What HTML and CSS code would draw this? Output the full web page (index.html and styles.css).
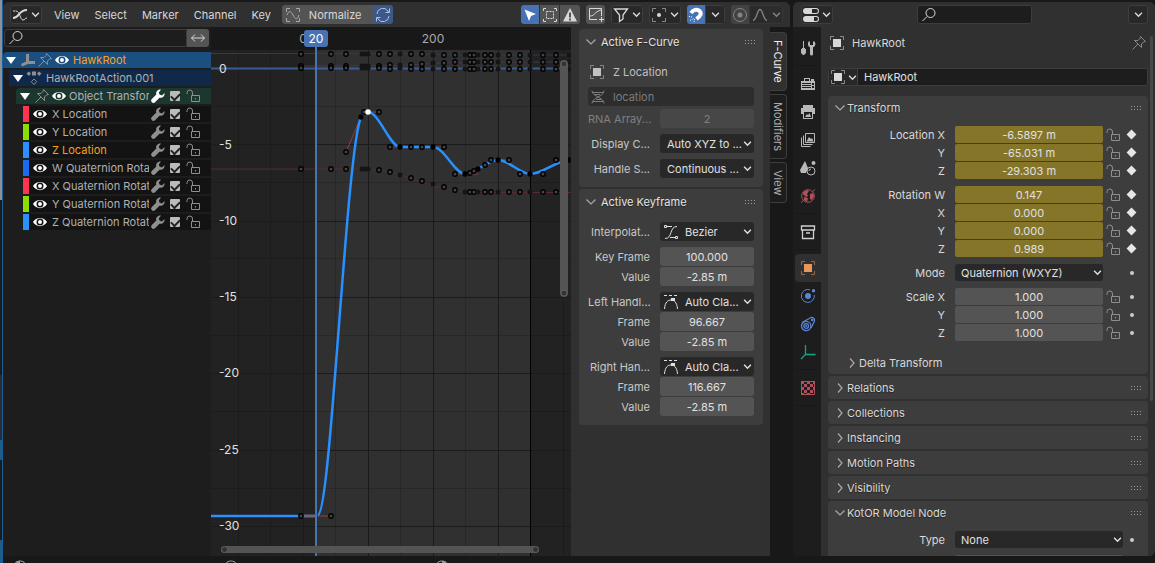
FILE: index.html
```html
<!DOCTYPE html>
<html lang="en">
<head>
<meta charset="utf-8">
<title>Graph Editor</title>
<link rel="stylesheet" href="styles.css">
</head>
<body>
<svg class="defs" aria-hidden="true">
  <symbol id="chev" viewBox="0 0 8 8"><path d="M1 2.500 4 5.500 7 2.500"/></symbol>
  <symbol id="down" viewBox="0 0 12 12"><path d="M1.500 3.500 6 8l4.500-4.500"/></symbol>
  <symbol id="right" viewBox="0 0 12 12"><path d="M4 1.500 8 6l-4 4.500"/></symbol>
  <symbol id="grip" viewBox="0 0 12 6"><path d="M1 1.500h1M4 1.500h1M7 1.500h1M10 1.500h1M1 4.500h1M4 4.500h1M7 4.500h1M10 4.500h1"/></symbol>
  <symbol id="search" viewBox="0 0 16 16"><circle cx="9.500" cy="6" r="4.500"/><path d="M6 9.500 1.500 14"/></symbol>
  <symbol id="eye" viewBox="0 0 16 16"><path class="fill" fill-rule="evenodd" d="M1 8C4 2.500 12 2.500 15 8 12 13.500 4 13.500 1 8Zm7-3.500a3.500 3.500 0 1 0 0 7 3.500 3.500 0 0 0 0-7Zm0 1.500a2 2 0 1 1 0 4 2 2 0 0 1 0-4Z"/></symbol>
  <symbol id="pin" viewBox="0 0 16 16"><path d="M9.500 1.500 14.500 6.500 12.500 7 10.500 9v3.500L3.500 5.500H7l2-2ZM7 9 1.500 14.500"/></symbol>
  <symbol id="wrench" viewBox="0 0 16 16"><path class="fill" d="M14.500 5 12 7.500 9.500 6.500 8.800 4.500 11 1.500C8 1 5.500 3.500 6.300 6.500L1.800 11a2.200 2.200 0 0 0 3.200 3.200L9.500 9.700c3 .7 5.500-1.700 5-4.700Z"/></symbol>
  <symbol id="lock" viewBox="0 0 16 16"><path d="M6.500 7.500h8v6h-8zM7.500 7.500V5a2.500 2.500 0 0 0-5.500-.5V6M10.500 10v1.500"/></symbol>
  <symbol id="object" viewBox="0 0 16 16"><path class="dim" d="M1.500 5V1.500H5M11 1.500h3.500V5M14.500 11v3.500H11M5 14.500H1.500V11"/><path class="fill" d="M4 4h8v8H4z"/></symbol>
  <symbol id="empty" viewBox="0 0 16 16"><path class="fill" d="M6 2h3v7h6v3H8l-6 2.500L1 12l5-2.500Z"/></symbol>
  <symbol id="action" viewBox="0 0 16 16"><path class="fill" d="M3 1.500 5 3.500 3 6 .5 3.500ZM13 1.500l2.500 2L13 6l-2-2.500ZM6 1.500h4v4H6z"/><path d="M8 9l2.700 2.700L8 14.500l-2.700-2.800Z"/></symbol>
  <symbol id="graph" viewBox="0 0 16 16"><path class="thick" d="M1 11c7 0 5-8 14-8"/><path d="M1 4h2.500M4 4c4 0 4 9 7 9s1-2 4-2"/></symbol>
  <symbol id="normalize" viewBox="0 0 16 16"><path d="M1.500 5V1.500H5M11 1.500h3.500V5M14.500 11v3.500H11M5 14.500H1.500V11M2 8C4 3 6 4 8 8s4 6 6 0"/></symbol>
  <symbol id="sync" viewBox="0 0 16 16"><path d="M2 7a6 6 0 0 1 11-3l.5 1M14.500 1.500v4h-4M14 9a6 6 0 0 1-11 3l-.5-1M1.500 14.500v-4h4"/></symbol>
  <symbol id="swap" viewBox="0 0 16 16"><path d="M1.500 8h13M5 4.500 1.500 8 5 11.500M11 4.500 14.500 8 11 11.500"/></symbol>
  <symbol id="cursor" viewBox="0 0 16 16"><path class="fill" d="M2.500 2.500 14 7 9 9 7 14Z"/></symbol>
  <symbol id="select-box" viewBox="0 0 16 16"><path d="M1.500 4V1.500H4M12 1.500h2.500V4M14.500 12v2.500H12M4 14.500H1.500V12"/><path stroke-dasharray="2 1" d="M4.500 4.500h7v7h-7z"/></symbol>
  <symbol id="warn" viewBox="0 0 16 16"><path class="fill" fill-rule="evenodd" d="M8 1 15 14.500H1ZM7 5.500v5h2v-5ZM7 11.500v2h2v-2Z"/></symbol>
  <symbol id="ghost" viewBox="0 0 16 16"><path d="M9 12.500H1.500v-11h12V9M2 9c5 0 4-4 11-6M13.500 10v5M11 12.500h5"/></symbol>
  <symbol id="funnel" viewBox="0 0 16 16"><path class="mid" d="M1.500 2h13L10 8v4l-3.500 2.500V8Z"/></symbol>
  <symbol id="pivot" viewBox="0 0 16 16"><path class="dim" d="M1.500 5V1.500H5M11 1.500h3.500V5M14.500 11v3.500H11M5 14.500H1.500V11"/><circle class="fill" cx="8" cy="8" r="2"/></symbol>
  <symbol id="magnet" viewBox="0 0 16 16"><path class="heavy" d="M3 6C5 3 9 1.500 11.500 4s1 5-3 8"/><path stroke-dasharray="1 1" d="M1 9.500l3 .5M2 13.500l4-2M6 15l1-4"/></symbol>
  <symbol id="prop" viewBox="0 0 16 16"><circle cx="8" cy="8" r="6.500"/><circle class="fill" cx="8" cy="8" r="2.500"/></symbol>
  <symbol id="falloff" viewBox="0 0 16 16"><path class="mid" d="M1 13.500C5 13 5 2.500 8 2.500s3 10.500 7 11"/></symbol>
  <symbol id="dna" viewBox="0 0 16 16"><path d="M2 1.500C2 8 14 8 14 14.500M14 1.500C14 8 2 8 2 14.500M2.500 3.500h11M5 5.500h5M6 10.500h5M2.500 12.500h11"/></symbol>
  <symbol id="bezier" viewBox="0 0 16 16"><path d="M2 14.500C10 14.500 6 2.500 14 2.500M4 2.500h5M7 13.500h5M1.500 1.500h2v2h-2zM12.500 12.500h2v2h-2z"/></symbol>
  <symbol id="autoclamp" viewBox="0 0 16 16"><path d="M1 1.500h3M6 1.500h3M11 1.500h3M1.500 15C2 8 5 6 8 6s6 2 6.500 9"/><path class="fill" d="M8 4h4v3H8z"/></symbol>
  <symbol id="editor-props" viewBox="0 0 16 16"><path class="fill" fill-rule="evenodd" d="M3 1h10a3 3 0 0 1 0 6H3a3 3 0 0 1 0-6Zm6 1v4h4a2 2 0 0 0 0-4ZM3 9h10a3 3 0 0 1 0 6H3a3 3 0 0 1 0-6Zm8 1v4h2a2 2 0 0 0 0-4Z"/></symbol>
  <symbol id="tools" viewBox="0 0 16 16"><path class="fill" d="M3 1h1v7h1v1h1v4l-2 2H3l-2-2V9h1V8h1ZM9 1l1 1v3h3V2l1-1c2 2 2 5-1 6.500V14a1.500 1.500 0 0 1-3 0V7.500C7.500 6 7.500 3 9 1Z"/></symbol>
  <symbol id="render" viewBox="0 0 16 16"><path class="fill" fill-rule="evenodd" d="M4 2h6v3h1V3h3v2h1v9H1V5h3Zm1 1v2h4V3ZM12 7v2h2V7Zm0 3v2h2v-2ZM2 7v1h9V7ZM2 9v1h9V9ZM2 11v1h9v-1Z"/></symbol>
  <symbol id="output" viewBox="0 0 16 16"><path class="fill" fill-rule="evenodd" d="M3 1h10v3h2v6h-2v5H3v-5H1V4h2Zm1 7v6h8V8Zm1 5 2-3 1 1 1.500-2L11 13Z"/></symbol>
  <symbol id="viewlayer" viewBox="0 0 16 16"><path d="M5.500 1.500h9v9h-9zM3.500 3.500v9h9M1.500 5.500v9h9"/><path class="fill" d="M6.500 9.500 9 5l2 2 1-1 1.500 3.500Z"/></symbol>
  <symbol id="scene" viewBox="0 0 16 16"><path class="fill" d="M5 1 8 8l-2 5H1L0 10Z"/><circle cx="11" cy="11" r="4"/><circle class="fill" cx="13.500" cy="3" r="2"/><path d="M9 11a2 2 0 0 1 2-2"/></symbol>
  <symbol id="world" viewBox="0 0 16 16"><circle cx="8" cy="8" r="6.300"/><path class="fill" d="M3 4 7 2l2 1-2 3 1 2-2 1-3-3ZM10 6l3-1 1 3-2 4-2-1ZM4 9l4 1-1 4-3-2Z"/><path d="M12 4l3-2.500M4 12l-3 2.500"/></symbol>
  <symbol id="collection" viewBox="0 0 16 16"><path class="mid" d="M1.500 2h13v4h-13zM2.500 6v8.500h11V6M6 9h4"/></symbol>
  <symbol id="physics" viewBox="0 0 16 16"><path d="M10 1.800A6.500 6.500 0 1 0 14.300 7"/><circle class="fill" cx="8" cy="8" r="3"/><circle class="fill" cx="13.500" cy="2.700" r="1.700"/></symbol>
  <symbol id="constraint" viewBox="0 0 16 16"><path class="mid" d="M2 6.500 11 1.500A3 3 0 0 1 14.500 5L11 12"/><circle class="mid" cx="6.200" cy="10" r="4.700"/><circle class="mid" cx="6.200" cy="10" r="2.300"/><circle class="fill" cx="6.200" cy="10" r="1"/><circle class="fill" cx="12.200" cy="4" r="1.300"/></symbol>
  <symbol id="axes" viewBox="0 0 16 16"><path class="mid" d="M5.500 1v9.500H15.500M5.500 10.500 1 15"/></symbol>
  <symbol id="texture" viewBox="0 0 16 16"><path d="M1.500 1.500h13v13h-13z"/><path class="fill" d="M1 1h3v3H1zM7 1h3v3H7zM4 4h3v3H4zM10 4h3v3h-3zM1 7h3v3H1zM7 7h3v3H7zM4 10h3v3H4zM10 10h3v3h-3zM13 1h2v3h-2zM13 7h2v3h-2zM1 13h3v2H1zM7 13h3v2H7z"/></symbol>
</svg>

<div class="backdrop"></div>
<main class="screen">
<section class="editor graph-editor">
  <header class="bar">
    <button class="box type" aria-label="Editor type"><svg class="i"><use href="#graph"/></svg><svg class="c"><use href="#chev"/></svg></button>
    <nav class="menus"><button>View</button><button>Select</button><button>Marker</button><button>Channel</button><button>Key</button></nav>
    <div class="joined norm"><button class="gray label"><svg class="i dimmed"><use href="#normalize"/></svg>Normalize</button><button class="sync" aria-label="Auto normalize"><svg class="i"><use href="#sync"/></svg></button></div>
    <div class="tools">
      <div class="joined"><button class="blue" aria-label="Only selected"><svg class="i"><use href="#cursor"/></svg></button><button class="gray wide" aria-label="Hidden"><svg class="i"><use href="#select-box"/></svg></button><button class="gray" aria-label="Errors"><svg class="i"><use href="#warn"/></svg></button></div>
      <button class="gray single" aria-label="Ghost curves"><svg class="i"><use href="#ghost"/></svg></button>
      <button class="box type" aria-label="Filters"><svg class="i"><use href="#funnel"/></svg><svg class="c"><use href="#chev"/></svg></button>
      <button class="box type" aria-label="Pivot"><svg class="i"><use href="#pivot"/></svg><svg class="c"><use href="#chev"/></svg></button>
      <div class="joined"><button class="blue" aria-label="Snap"><svg class="i"><use href="#magnet"/></svg></button><button class="dark" aria-label="Snap options"><svg class="c"><use href="#chev"/></svg></button></div>
      <div class="joined faded"><button class="gray" aria-label="Proportional editing"><svg class="i"><use href="#prop"/></svg></button><button class="dark falloff" aria-label="Falloff"><svg class="i"><use href="#falloff"/></svg><svg class="c"><use href="#chev"/></svg></button></div>
    </div>
  </header>
  <div class="work">
    <aside class="channels">
      <div class="find"><label class="search"><svg class="i"><use href="#search"/></svg><input type="text" aria-label="Search channels"></label><button aria-label="Invert"><svg class="i"><use href="#swap"/></svg></button></div>
      <ul class="tree">
        <li class="root"><button class="tri" aria-label="Collapse"></button><svg class="i gry"><use href="#empty"/></svg><svg class="i gry"><use href="#pin"/></svg><svg class="i"><use href="#eye"/></svg><span class="name hot">HawkRoot</span></li>
        <li class="act"><button class="tri" aria-label="Collapse"></button><svg class="i gry"><use href="#action"/></svg><span class="name">HawkRootAction.001</span></li>
        <li class="grp"><button class="tri" aria-label="Collapse"></button><svg class="i gry"><use href="#pin"/></svg><svg class="i"><use href="#eye"/></svg><span class="name">Object Transfor</span><svg class="i"><use href="#wrench"/></svg><input type="checkbox" checked aria-label="Object Transforms"><svg class="i gry"><use href="#lock"/></svg></li>
        <li class="ch red"><svg class="i"><use href="#eye"/></svg><span class="name">X Location</span><svg class="i gry"><use href="#wrench"/></svg><input type="checkbox" checked aria-label="X Location"><svg class="i gry"><use href="#lock"/></svg></li>
        <li class="ch green"><svg class="i"><use href="#eye"/></svg><span class="name">Y Location</span><svg class="i gry"><use href="#wrench"/></svg><input type="checkbox" checked aria-label="Y Location"><svg class="i gry"><use href="#lock"/></svg></li>
        <li class="ch sky"><svg class="i"><use href="#eye"/></svg><span class="name hot">Z Location</span><svg class="i gry"><use href="#wrench"/></svg><input type="checkbox" checked aria-label="Z Location"><svg class="i gry"><use href="#lock"/></svg></li>
        <li class="ch royal"><svg class="i"><use href="#eye"/></svg><span class="name">W Quaternion Rotat</span><svg class="i gry"><use href="#wrench"/></svg><input type="checkbox" checked aria-label="W Quaternion"><svg class="i gry"><use href="#lock"/></svg></li>
        <li class="ch red"><svg class="i"><use href="#eye"/></svg><span class="name">X Quaternion Rotat</span><svg class="i gry"><use href="#wrench"/></svg><input type="checkbox" checked aria-label="X Quaternion"><svg class="i gry"><use href="#lock"/></svg></li>
        <li class="ch green"><svg class="i"><use href="#eye"/></svg><span class="name">Y Quaternion Rotat</span><svg class="i gry"><use href="#wrench"/></svg><input type="checkbox" checked aria-label="Y Quaternion"><svg class="i gry"><use href="#lock"/></svg></li>
        <li class="ch sky"><svg class="i"><use href="#eye"/></svg><span class="name">Z Quaternion Rotat</span><svg class="i gry"><use href="#wrench"/></svg><input type="checkbox" checked aria-label="Z Quaternion"><svg class="i gry"><use href="#lock"/></svg></li>
      </ul>
    </aside>
    <div class="plot">
      <svg class="curves" viewBox="211 27 360 529" preserveAspectRatio="xMinYMin slice">
        <defs>
          <marker id="handle" markerUnits="userSpaceOnUse" markerWidth="8" markerHeight="8" refX="4" refY="4"><circle cx="4" cy="4" r="2.200" fill="#444" stroke="#000" stroke-width="1.400"/></marker>
          <marker id="key" markerUnits="userSpaceOnUse" markerWidth="8" markerHeight="8" refX="4" refY="4"><circle cx="4" cy="4" r="2.700" fill="#000"/></marker>
          <marker id="faint" markerUnits="userSpaceOnUse" markerWidth="8" markerHeight="8" refX="4" refY="4"><circle cx="4" cy="4" r="2.500" fill="#151515"/></marker>
        </defs>
        <rect x="211" y="27" width="360" height="529" fill="#222"/>
        <rect x="317" y="27" width="213" height="529" fill="#303030"/>
        <path class="grid minor" d="M270.500 50v506M335.500 50v506M400.500 50v506M465.500 50v506M211 106.500h360M211 182.500h360M211 258.500h360M211 335.500h360M211 411.500h360M211 488.500h360"/>
        <path class="grid" d="M238.500 50v506M303.500 50v506M368.500 50v506M433.500 50v506M498.500 50v506M563.500 50v506M211 144.500h360M211 221.500h360M211 297.500h360M211 373.500h360M211 450.500h360M211 526.500h360"/>
        <path d="M530.500 50v506" stroke="#000"/>
        <path d="M211 68.500h360" stroke="#3a5b93" stroke-width="2"/>
        <g class="pts">
          <path class="steel" d="M211 53.500H410L450 55H571"/>
          <path class="purple" d="M303 66 400 65.500 450 62.500 571 62"/>
          <path class="brick" d="M211 169H368C400 169 435 192 470 192.500H571"/>
          <polyline class="h" points="301,54 331,54 346,54 379,54 390,54 411,54 422,54 444,55 455,55 470,55 474,55 485,55 491,55 509,55 520,55 543,55 556,55"/>
          <polyline class="f" points="362,54 365,54 368,54 400,54 433,55 465,55 478,55 498,55 530,55 569,55"/>
          <polyline class="h" points="301,66 331,66 346,66 379,66 390,65 411,65 422,64 444,63 455,62 470,62 474,62 485,62 491,62 509,62 520,62 543,62 556,62"/>
          <polyline class="f" points="362,66 365,66 368,66 400,65 433,63 465,62 478,62 498,62 530,62 569,62"/>
          <polyline class="h" points="301,68 331,68 346,68 379,68 390,69 411,69 422,69 444,69 455,69 470,69 474,69 485,69 491,69 509,69 520,69 543,69 556,69"/>
          <polyline class="f" points="362,68 365,68 368,68 400,68 433,69 465,69 478,69 498,69 530,69 569,69"/>
          <polyline class="h" points="301,169 331,169 346,169 379,170 390,172 411,178 422,181 444,187 455,190 470,192 474,192 485,192 491,192 509,192 520,192 543,192 556,192"/>
          <polyline class="f" points="362,169 365,169 368,169 400,175 433,184 465,192 478,192 498,192 530,192"/>
        </g>
        <path class="arm" d="M361 117 346 152M368 112H379M390 147H400M433 147H444M455 174H478M491 160H509M520 173H543M316 516H331"/>
        <path class="main" d="M211 516H301M318 515C331 512 346 152 361 117 363 113 366 112 368 112 379 112 390 147 400 147H433C444 147 455 174 465 174 470 174 474 171 478 169 485 165 491 160 498 160 509 160 520 174 530 174 543 174 556 160 571 160"/>
        <path d="M303 516H315" stroke="#6b6680" stroke-width="3"/>
        <polyline class="h" points="301,516 331,516 346,152 364,112 379,112 390,147 411,147 422,147 444,147 455,174 470,173 474,171 485,165 491,160 509,160 520,174 543,174 556,160"/>
        <polyline class="k" points="361,117 400,147 433,147 465,174 478,169 498,160 530,174 569,160"/>
        <circle cx="368" cy="112" r="2.800" fill="#fff"/>
        <rect x="211" y="27" width="360" height="23" fill="#181818"/>
        <g class="val"><text x="219" y="73">0</text><text x="219" y="149">-5</text><text x="219" y="225">-10</text><text x="219" y="301">-15</text><text x="219" y="377">-20</text><text x="219" y="454">-25</text><text x="219" y="530">-30</text></g>
        <g class="frame"><text x="303" y="43">0</text><text x="433" y="43">200</text></g>
        <path d="M316 45V556" stroke="#4772b3" stroke-width="2"/>
        <rect x="304" y="30" width="24" height="17" rx="3" fill="#4772b3"/>
        <text class="now" x="316" y="43">20</text>
        <g class="scroll"><rect x="221" y="546" width="318" height="7" rx="3.500"/><circle cx="224.500" cy="549.500" r="3"/><circle cx="535.500" cy="549.500" r="3"/><rect x="560" y="60" width="8" height="237" rx="4"/><circle cx="564" cy="64" r="3"/><circle cx="564" cy="293" r="3"/></g>
      </svg>
    </div>
    <aside class="side">
      <section class="panel">
        <button class="head"><svg class="d"><use href="#down"/></svg>Active F-Curve<svg class="g"><use href="#grip"/></svg></button>
        <div class="body">
          <p class="curve-name"><svg class="i"><use href="#object"/></svg>Z Location</p>
          <div class="stack tight"><label class="path"><svg class="i"><use href="#dna"/></svg><input type="text" value="location" disabled aria-label="Data path"></label>
          <label class="row off"><span>RNA Array...</span><input type="text" value="2" disabled></label></div>
          <label class="row"><span>Display C...</span><span class="pick"><select><option>Auto XYZ to ...</option></select><svg class="c"><use href="#chev"/></svg></span></label>
          <label class="row"><span>Handle S...</span><span class="pick"><select><option>Continuous ...</option></select><svg class="c"><use href="#chev"/></svg></span></label>
        </div>
      </section>
      <section class="panel">
        <button class="head"><svg class="d"><use href="#down"/></svg>Active Keyframe<svg class="g"><use href="#grip"/></svg></button>
        <div class="body">
          <label class="row"><span>Interpolat...</span><span class="pick icon"><svg class="i"><use href="#bezier"/></svg><select><option>Bezier</option></select><svg class="c"><use href="#chev"/></svg></span></label>
          <div class="stack"><label class="row"><span>Key Frame</span><input type="text" value="100.000"></label><label class="row"><span>Value</span><input type="text" value="-2.85 m"></label></div>
          <div class="stack"><label class="row"><span>Left Handl...</span><span class="pick icon"><svg class="i"><use href="#autoclamp"/></svg><select><option>Auto Cla...</option></select><svg class="c"><use href="#chev"/></svg></span></label><label class="row"><span>Frame</span><input type="text" value="96.667"></label><label class="row"><span>Value</span><input type="text" value="-2.85 m"></label></div>
          <div class="stack"><label class="row"><span>Right Han...</span><span class="pick icon"><svg class="i"><use href="#autoclamp"/></svg><select><option>Auto Cla...</option></select><svg class="c"><use href="#chev"/></svg></span></label><label class="row"><span>Frame</span><input type="text" value="116.667"></label><label class="row"><span>Value</span><input type="text" value="-2.85 m"></label></div>
        </div>
      </section>
    </aside>
    <nav class="vtabs"><button class="on">F-Curve</button><button>Modifiers</button><button>View</button></nav>
  </div>
</section>

<section class="editor props">
  <header class="bar pbar">
    <button class="box type" aria-label="Editor type"><svg class="i"><use href="#editor-props"/></svg><svg class="c"><use href="#chev"/></svg></button>
    <label class="search"><svg class="i"><use href="#search"/></svg><input type="text" aria-label="Search properties"></label>
    <button class="box opt" aria-label="Options"><svg class="c"><use href="#chev"/></svg></button>
  </header>
  <div class="pwork">
    <nav class="ptabs">
      <button aria-label="Tool"><svg class="i"><use href="#tools"/></svg></button><hr>
      <button aria-label="Render"><svg class="i"><use href="#render"/></svg></button>
      <button aria-label="Output"><svg class="i"><use href="#output"/></svg></button>
      <button aria-label="View layer"><svg class="i"><use href="#viewlayer"/></svg></button>
      <button aria-label="Scene"><svg class="i"><use href="#scene"/></svg></button>
      <button class="rose" aria-label="World"><svg class="i"><use href="#world"/></svg></button><hr>
      <button class="lite" aria-label="Collection"><svg class="i"><use href="#collection"/></svg></button><hr>
      <button class="on" aria-label="Object"><svg class="i"><use href="#object"/></svg></button>
      <button class="azure" aria-label="Physics"><svg class="i"><use href="#physics"/></svg></button>
      <button class="azure" aria-label="Constraints"><svg class="i"><use href="#constraint"/></svg></button>
      <button class="mint" aria-label="Data"><svg class="i"><use href="#axes"/></svg></button><hr>
      <button class="rose" aria-label="Texture"><svg class="i"><use href="#texture"/></svg></button><hr>
    </nav>
    <div class="content">
      <div class="crumb"><svg class="i"><use href="#object"/></svg>HawkRoot<svg class="i pinned"><use href="#pin"/></svg></div>
      <div class="ident"><button aria-label="Browse object"><svg class="i"><use href="#object"/></svg><svg class="c"><use href="#chev"/></svg></button><input type="text" value="HawkRoot" aria-label="Name"></div>
      <section class="panel">
        <button class="head"><svg class="d"><use href="#down"/></svg>Transform<svg class="g"><use href="#grip"/></svg></button>
        <div class="pbody">
          <div class="stack">
            <div class="prow keyed"><label for="lx">Location X</label><input id="lx" value="-6.5897 m"><svg class="i"><use href="#lock"/></svg><i class="dia"></i></div>
            <div class="prow keyed"><label for="ly">Y</label><input id="ly" value="-65.031 m"><svg class="i"><use href="#lock"/></svg><i class="dia"></i></div>
            <div class="prow keyed"><label for="lz">Z</label><input id="lz" value="-29.303 m"><svg class="i"><use href="#lock"/></svg><i class="dia"></i></div>
          </div>
          <div class="stack">
            <div class="prow keyed"><label for="rw">Rotation W</label><input id="rw" value="0.147"><svg class="i"><use href="#lock"/></svg><i class="dia"></i></div>
            <div class="prow keyed"><label for="rx">X</label><input id="rx" value="0.000"><svg class="i"><use href="#lock"/></svg><i class="dia"></i></div>
            <div class="prow keyed"><label for="ry">Y</label><input id="ry" value="0.000"><svg class="i"><use href="#lock"/></svg><i class="dia"></i></div>
            <div class="prow keyed"><label for="rz">Z</label><input id="rz" value="0.989"><svg class="i"><use href="#lock"/></svg><i class="dia"></i></div>
          </div>
          <div class="prow"><label for="mode">Mode</label><span class="pick"><select id="mode"><option>Quaternion (WXYZ)</option></select><svg class="c"><use href="#chev"/></svg></span><span></span><i class="dot"></i></div>
          <div class="stack">
            <div class="prow"><label for="sx">Scale X</label><input id="sx" value="1.000"><svg class="i"><use href="#lock"/></svg><i class="dot"></i></div>
            <div class="prow"><label for="sy">Y</label><input id="sy" value="1.000"><svg class="i"><use href="#lock"/></svg><i class="dot"></i></div>
            <div class="prow"><label for="sz">Z</label><input id="sz" value="1.000"><svg class="i"><use href="#lock"/></svg><i class="dot"></i></div>
          </div>
          <button class="sub"><svg class="d"><use href="#right"/></svg>Delta Transform</button>
        </div>
      </section>
      <section class="panel"><button class="head"><svg class="d"><use href="#right"/></svg>Relations<svg class="g"><use href="#grip"/></svg></button></section>
      <section class="panel"><button class="head"><svg class="d"><use href="#right"/></svg>Collections<svg class="g"><use href="#grip"/></svg></button></section>
      <section class="panel"><button class="head"><svg class="d"><use href="#right"/></svg>Instancing<svg class="g"><use href="#grip"/></svg></button></section>
      <section class="panel"><button class="head"><svg class="d"><use href="#right"/></svg>Motion Paths<svg class="g"><use href="#grip"/></svg></button></section>
      <section class="panel"><button class="head"><svg class="d"><use href="#right"/></svg>Visibility<svg class="g"><use href="#grip"/></svg></button></section>
      <section class="panel"><button class="head"><svg class="d"><use href="#down"/></svg>KotOR Model Node<svg class="g"><use href="#grip"/></svg></button>
        <div class="pbody"><div class="prow long"><label for="kt">Type</label><span class="pick"><select id="kt"><option>None</option></select><svg class="c"><use href="#chev"/></svg></span><i class="dot"></i></div>
        <div class="prow long"><span></span><input aria-label="Parent"></div></div>
      </section>
      <div class="thumb"></div>
    </div>
  </div>
</section>
</main>
<footer class="status"><svg class="mouse left" viewBox="0 0 12 16"><rect x="1" y="1" width="10" height="14" rx="4"/><path class="fill" d="M1 6V4l3-3h2v5Z"/></svg><svg class="mouse" viewBox="0 0 12 16"><rect x="1" y="1" width="10" height="14" rx="4"/><path d="M6 3v4"/></svg><svg class="mouse" viewBox="0 0 12 16"><rect x="1" y="1" width="10" height="14" rx="4"/><path class="fill" d="M11 6V4L8 1H6v5Z"/></svg></footer>
</body>
</html>
```
FILE: styles.css
```css
* { box-sizing: border-box; }
html, body { height: 100%; }
body {
  margin: 0;
  display: grid;
  grid-template-columns: 3px minmax(0, 1fr);
  grid-template-rows: minmax(0, 1fr) 7px;
  background: #181818;
  color: #d8d8d8;
  font: 11px/16px Inter, "Noto Sans", sans-serif;
  overflow: hidden;
}
button, input, select { font: inherit; color: inherit; margin: 0; padding: 0; border: 0; background: none; min-width: 0; outline: 0; border-radius: 3px; }
button { display: flex; align-items: center; justify-content: center; }
select { appearance: none; width: 100%; height: 100%; }
p, ul { margin: 0; padding: 0; list-style: none; }
svg { fill: none; stroke: currentColor; stroke-width: 1; flex: none; }
.defs { position: absolute; width: 0; height: 0; }
.fill { fill: currentColor; stroke: none; }
.mid { stroke-width: 1.3; }
.thick { stroke-width: 2; }
.heavy { stroke-width: 4; }
.dim { opacity: .55; }
.i { width: 16px; height: 16px; }
.c { width: 9px; height: 9px; stroke-width: 1.3; }
.d { width: 12px; height: 12px; color: #aaa; stroke-width: 1.2; }
.g { width: 12px; height: 6px; margin-left: auto; color: #999; }
.gry { color: #8f8f8f; }
.backdrop { grid-row: 1 / 3; background: linear-gradient(#8b9297 200px, #1b1b1b 200px 375px, #272c34 375px 440px, #1c5d8c 440px 460px, #1b1b1b 460px 540px, #1c5d8c 540px); border-right: 1px solid #1d5d94; }
.screen { display: grid; grid-template-columns: minmax(0, 787fr) minmax(0, 362fr); gap: 3px; padding-top: 2px; }
.editor { display: flex; flex-direction: column; min-height: 0; border-radius: 6px; overflow: hidden; background: #303030; }

.bar { display: flex; align-items: center; height: 25px; flex: none; padding: 0 7px; background: #303030; }
.bar button { height: 19px; }
.box { background: #282828; border: 1px solid #3d3d3d; }
.type { width: 32px; gap: 3px; }
.menus { display: flex; gap: 15px; margin-left: 12px; }
.joined { display: flex; border-radius: 3px; overflow: hidden; }
.joined button { width: 18px; border-radius: 0; }
.joined .wide { width: 20px; margin-right: 1px; border-left: 1px solid #333; }
.joined button + button:last-child { width: 20px; }
.norm { margin-left: 11px; }
.joined button.label { width: 91px; gap: 8px; padding-left: 3px; justify-content: flex-start; }
.norm .sync { background: #3c588b; color: #b5c0d2; }
.dimmed { color: #aaa; }
.gray { background: #545454; }
.blue { background: #4772b3; color: #fff; }
.dark { background: #282828; border: 1px solid #3d3d3d; }
.tools { display: flex; gap: 6px; margin-left: auto; }
.single { width: 19px; }
.faded { opacity: .5; }
.joined button.falloff:last-child { width: 34px; gap: 4px; }

.work { display: grid; grid-template-columns: 208px minmax(0, 1fr) 199px 20px; flex: 1; min-height: 0; }
.channels { background: #1d1d1d; min-width: 0; }
.find { display: flex; height: 23px; padding: 2px 2px 3px 1px; }
.find button { width: 22px; background: #545454; border-radius: 0 3px 3px 0; }
.search { display: flex; align-items: center; flex: 1; min-width: 0; padding-left: 3px; background: #1d1d1d; border: 1px solid #3d3d3d; border-radius: 3px; }
.find .search { border-radius: 3px 0 0 3px; }
.search input { flex: 1; }
.tree { padding-top: 2px; display: grid; grid-template-columns: minmax(0, 1fr); gap: 2px; }
.tree li { display: flex; align-items: center; height: 16px; background: #131313; color: #b0b0b0; }
.tree .i { color: #fff; margin-right: 1px; }
.tree .gry { color: #8f8f8f; }
.tri { width: 0; height: 0; border: 5px solid transparent; border-top: 7px solid #fff; border-bottom: 0; border-radius: 0; flex: none; }
.name { flex: 1; min-width: 0; overflow: hidden; white-space: nowrap; }
.tree .hot { color: #f5a11d; }
.tree .root { background: #1b4f7f; padding-left: 3px; border-radius: 4px 0 0 0; }
.root .tri { margin-right: 4px; }
.root .name { margin-left: 2px; }
.tree .act { background: #10294a; margin-left: 6px; padding-left: 4px; }
.act .tri { margin-right: 3px; }
.tree .act .i { margin-right: 4px; }
.tree .grp { background: #1c3630; margin-left: 13px; padding-left: 4px; border-radius: 4px 0 0 0; }
.grp .tri { margin-right: 4px; }
.grp .name { margin-left: 1px; }
.tree .ch { margin-left: 20px; border-left: 6px solid; padding-left: 3px; }
.ch .name { margin-left: 3px; }
.tree .red { border-color: #ff3352; }
.tree .green { border-color: #8bdc00; }
.tree .sky { border-color: #2890ff; }
.tree .royal { border-color: #1a6af0; }
.tree li > .name + .i { margin: 0 4px 0 1px; }
.tree input { appearance: none; width: 10px; height: 10px; margin-right: 5px; border-radius: 1px; background: #bbb; display: grid; place-items: center; flex: none; }
.tree input::after { content: ""; width: 7px; height: 4px; border: solid #222; border-width: 0 0 2px 2px; rotate: -45deg; }
.tree li > input + .i { margin-right: 10px; }

.plot { position: relative; min-width: 0; overflow: hidden; }
.curves { position: absolute; width: 100%; height: 100%; stroke: none; }
.grid { stroke: #1b1b1b; }
.minor { stroke: #000; opacity: .16; }
.h { stroke: none; marker: url(#handle); }
.f { stroke: none; marker: url(#faint); }
.k { stroke: none; marker: url(#key); }
.steel { stroke: #293d50; }
.purple { stroke: #41394b; }
.brick { stroke: #5b2a2e; }
.arm { stroke: #8a4438; }
.main { stroke: #2890ff; stroke-width: 2.5; }
.val text, .frame text, .now { fill: #ddd; stroke: none; font-size: 12px; }
.val text { fill: #e0e0e0; }
.frame text { fill: #aaa; text-anchor: middle; }
.now { fill: #fff; text-anchor: middle; }
.scroll rect { fill: #545454; stroke: none; }
.scroll circle { fill: #333; stroke: #606060; }

.side { display: flex; flex-direction: column; gap: 2px; padding: 2px 7px 0 8px; background: #303030; }
.panel { background: #3d3d3d; border-radius: 4px; }
.head { width: 100%; height: 26px; gap: 4px; padding: 0 7px 0 6px; justify-content: flex-start; color: #e6e6e6; text-shadow: 0 1px 1px #222; }
.body { display: flex; flex-direction: column; gap: 6px; padding: 7px 9px 9px; }
.curve-name { display: flex; align-items: center; gap: 8px; height: 19px; padding-left: 1px; color: #c0c0c0; }
.stack { display: grid; grid-template-columns: minmax(0, 1fr); gap: 1px; }
.tight { gap: 3px; }
.row { display: grid; grid-template-columns: minmax(0, 62fr) minmax(0, 94fr); gap: 10px; height: 19px; align-items: center; text-align: right; color: #c8c8c8; white-space: nowrap; }
.row input, .row .pick { width: 100%; height: 100%; background: #545454; text-align: center; color: #e0e0e0; }
.off, .row.off input { color: #808080; }
.row.off input { background: #474747; }
.path { display: flex; align-items: center; gap: 7px; height: 19px; padding-left: 2px; background: #2d2d2d; border-radius: 3px; color: #7c7c7c; }
.path input { flex: 1; }
.pick, .row .pick { position: relative; display: flex; align-items: center; height: 100%; background: #282828; border-radius: 3px; color: #e0e0e0; }
.pick select { padding-left: 7px; border-radius: 3px; }
.pick .c { position: absolute; right: 2px; pointer-events: none; }
.icon .i { position: absolute; left: 3px; pointer-events: none; }
.icon select { padding-left: 25px; }
.vtabs { background: #181818; display: flex; flex-direction: column; align-items: flex-start; gap: 3px; padding-top: 5px; }
.vtabs button { writing-mode: vertical-rl; width: 17px; padding: 7px 0; border: 1px solid #3d3d3d; border-left: 0; border-radius: 0 4px 4px 0; background: #1d1d1d; color: #aaa; }
.vtabs .on { background: #303030; color: #eee; }

.pbar { display: grid; grid-template-columns: 1fr 115px 1fr; padding: 0 7px 0 8px; }
.pbar .search { height: 19px; }
.opt { width: 20px; justify-self: end; }
.pwork { display: grid; grid-template-columns: 28px minmax(0, 1fr); flex: 1; min-height: 0; overflow: hidden; }
.ptabs { display: flex; flex-direction: column; padding: 7px 0 0 2px; background: #1d1d1d; }
.ptabs button { height: 28px; flex: none; color: #b8b8b8; border-radius: 4px 0 0 4px; }
.ptabs hr { width: 24px; height: 1px; margin: 3px 0 4px; border: 0; background: #181818; flex: none; }
.ptabs .on { color: #e8975a; background: #303030; }
.ptabs .rose { color: #b0505c; }
.ptabs .azure { color: #5a84d6; }
.ptabs .mint { color: #12a682; }
.ptabs .lite { color: #d0d0d0; }
.content { position: relative; display: flex; flex-direction: column; gap: 2px; padding: 0 7px; overflow: hidden; background: #303030; }
.crumb { display: flex; align-items: center; gap: 7px; height: 32px; padding: 0 1px; margin-bottom: 7px; flex: none; }
.pinned { margin-left: auto; color: #888; }
.ident { display: flex; height: 18px; margin-bottom: 8px; border: 1px solid #3d3d3d; border-radius: 3px; background: #1d1d1d; flex: none; }
.ident button { width: 29px; gap: 2px; background: #282828; border-right: 1px solid #3d3d3d; border-radius: 3px 0 0 3px; }
.ident input { flex: 1; padding-left: 6px; color: #e0e0e0; }
.content .panel { flex: none; }
.content .head { height: 23px; gap: 1px; padding: 0 6px; color: #d8d8d8; }
.pbody { display: flex; flex-direction: column; gap: 7px; padding: 7px 8px 0 0; }
.prow { display: grid; grid-template-columns: minmax(0, 127fr) minmax(0, 148fr) 20px 17px; height: 17px; align-items: center; }
.long { grid-template-columns: minmax(0, 127fr) minmax(0, 168fr) 17px; }
.prow label { text-align: right; padding-right: 10px; }
.prow input { height: 100%; background: #545454; text-align: center; color: #e0e0e0; border-radius: 2px; }
.keyed input { background: #857528; }
.prow .i { justify-self: center; color: #8f8f8f; }
.prow .pick select { padding-left: 6px; }
.prow .pick .c { right: 1px; }
.dia { width: 7px; height: 7px; rotate: 45deg; background: #e6e6e6; justify-self: center; }
.dot { width: 4px; height: 4px; border-radius: 2px; background: #ccc; justify-self: center; }
.sub { justify-content: flex-start; gap: 1px; height: 18px; padding-left: 18px; margin: 6px 0 2px; }
.thumb { position: absolute; top: 9px; right: 2px; width: 3px; height: 365px; border-radius: 2px; background: #484848; }
.status { display: flex; gap: 199px; padding: 4px 0 0 11px; overflow: hidden; color: #999; }
.mouse { width: 12px; height: 16px; }
```
